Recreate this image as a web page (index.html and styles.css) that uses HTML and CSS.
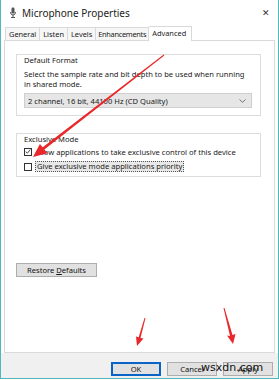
FILE: index.html
```html
<!DOCTYPE html>
<html>
<head>
<meta charset="utf-8">
<link rel="stylesheet" href="styles.css">
</head>
<body>
<div class="window">
  <div class="titlebar">
    <svg class="app-icon" width="6" height="11" viewBox="0 0 6 11">
      <rect x="1.5" y="0.5" width="3" height="6" rx="1.2" fill="#555"/>
      <path d="M0.5 5 Q0.5 8 3 8 Q5.5 8 5.5 5" fill="none" stroke="#555" stroke-width="1"/>
      <path d="M3 8 V10.5 M1 10.5 H5" stroke="#555" stroke-width="1"/>
    </svg>
    <span class="title">Microphone Properties</span>
    <span class="close">✕</span>
  </div>
  <div class="tabs">
    <span class="tab">General</span>
    <span class="tab">Listen</span>
    <span class="tab">Levels</span>
    <span class="tab">Enhancements</span>
    <span class="tab active">Advanced</span>
  </div>
  <div class="panel">
    <div class="group g1">
      <div class="legend">Default Format</div>
      <p class="desc">Select the sample rate and bit depth to be used when running in shared mode.</p>
      <div class="select">
        <span>2 channel, 16 bit, 44100 Hz (CD Quality)</span>
        <svg width="7" height="4" viewBox="0 0 7 4"><path d="M0.5 0.5 L3.5 3.3 L6.5 0.5" fill="none" stroke="#666" stroke-width="0.9"/></svg>
      </div>
    </div>
    <div class="group g2">
      <div class="legend">Exclusive Mode</div>
      <div class="check">
        <span class="box"><svg width="7" height="7" viewBox="0 0 7 7"><path d="M0.8 3.6 L2.7 5.5 L6.2 1.2" fill="none" stroke="#333" stroke-width="1"/></svg></span>
        <span>Allow applications to take exclusive control of this device</span>
      </div>
      <div class="check">
        <span class="box"></span>
        <span class="focus">Give exclusive mode applications priority</span>
      </div>
    </div>
    <div class="spacer"></div>
    <div class="btn restore"><span>Restore <u>D</u>efaults</span></div>
  </div>
  <div class="footer">
    <div class="btn ok">OK</div>
    <div class="btn">Cancel</div>
    <div class="btn">Apply</div>
  </div>
  <svg class="arrows" width="279" height="380" viewBox="0 0 279 380">
    <polygon fill="#e8282a" points="164.3,55.4 44.4,149.6 47.5,153.2 33,157 39.9,143.9 42.7,147.3 163.7,54.6"/>
    <polygon fill="#e8282a" points="145.5,318 140.5,338 143.5,338.5 137,346 136,336.5 138.7,337.3 144.5,318"/>
    <polygon fill="#e8282a" points="224.5,308 232.5,335 235.5,334 233,344 227,335.5 230,336 223.5,308"/>
  </svg>
  <div class="watermark">wsxdn.com</div>
</div>
</body>
</html>
```
FILE: styles.css
```css
* { box-sizing: border-box; }
html, body { margin: 0; padding: 0; }
body {
  width: 279px;
  height: 380px;
  background: #ffffff;
  font-family: "Noto Sans", "Open Sans", sans-serif;
  font-size: 7.6px;
  color: #1a1a1a;
  overflow: hidden;
}
.window {
  position: relative;
  width: 279px;
  height: 379px;
  border: 1px solid #4fb8bd;
  border-top: none;
  display: flex;
  flex-direction: column;
  background: #ffffff;
}
.titlebar {
  height: 25px;
  display: flex;
  align-items: center;
  padding-left: 9px;
  padding-right: 8px;
  flex: none;
}
.app-icon { margin-right: 6px; }
.title { font-size: 10px; color: #222; flex: 1; }
.close { font-size: 9px; color: #333; }
.tabs {
  display: flex;
  align-items: flex-end;
  height: 14px;
  padding-left: 4px;
  margin-top: 1px;
  flex: none;
}
.tab {
  height: 13px;
  line-height: 12px;
  padding: 0 3px;
  border: 1px solid #d9d9d9;
  border-bottom: none;
  border-right: none;
  background: #f6f6f6;
  color: #222;
  font-size: 7.4px;
}
.tab:nth-child(4) { border-right: 1px solid #d9d9d9; letter-spacing: -0.3px; padding: 0 2px; }
.tab.active {
  height: 15px;
  background: #fff;
  border: 1px solid #d9d9d9;
  border-bottom: none;
  border-left: none;
  margin-bottom: -1px;
  position: relative;
  z-index: 1;
  padding: 0 5px 0 3px;
  line-height: 13px;
}
.panel {
  margin: 0 3px 0 3px;
  height: 313px;
  border: 1px solid #d9d9d9;
  background: #fff;
  padding: 13px 13px 0 11px;
  display: flex;
  flex-direction: column;
  flex: none;
}
.group {
  border: 1px solid #dcdcdc;
  padding: 0 8px 0 7px;
  flex: none;
}
.legend {
  background: #fff;
  align-self: flex-start;
  display: inline-block;
  margin: -6px 0 0 -2px;
  padding: 0 2px;
  line-height: 11px;
}
.g1 { height: 62px; }
.desc {
  margin: 0;
  line-height: 9.5px;
  margin-top: 4px;
}
.select {
  margin-top: 4px;
  height: 15px;
  background: #e6e6e6;
  border: 1px solid #cfcfcf;
  display: flex;
  align-items: center;
  justify-content: space-between;
  padding: 0 5px 0 3px;
}
.g2 {
  margin-top: 17px;
  height: 44px;
}
.check {
  display: flex;
  align-items: center;
  height: 11px;
  margin-top: 1px;
}
.g2 .check:first-of-type { margin-top: 5px; }
.check + .check { margin-top: 4px; }
.box {
  width: 8px;
  height: 8px;
  border: 1px solid #333;
  background: #fff;
  margin-right: 3px;
  display: flex;
  align-items: center;
  justify-content: center;
  flex: none;
}
.focus {
  background: #e8e8e8;
  border: 1px dotted #555;
  padding: 0 1px;
  line-height: 9px;
}
.spacer { height: 86px; flex: none; }
.btn {
  height: 14px;
  width: 50px;
  border: 1px solid #adadad;
  background: #e1e1e1;
  display: flex;
  align-items: center;
  justify-content: center;
  color: #111;
}
.restore { width: 81px; }
.footer {
  flex: 1;
  background: #f0f0f0;
  display: flex;
  justify-content: flex-end;
  align-items: flex-start;
  gap: 6px;
  padding: 9px 5px 0 0;
}
.btn.ok { border: 1px solid #0a64c8; box-shadow: inset 0 0 0 1px #0a64c8; }
.arrows {
  position: absolute;
  left: -1px;
  top: 0;
  pointer-events: none;
}
.watermark {
  position: absolute;
  left: 200px;
  top: 361px;
  font-family: "DejaVu Sans", sans-serif;
  font-size: 11px;
  color: #111;
}
```
